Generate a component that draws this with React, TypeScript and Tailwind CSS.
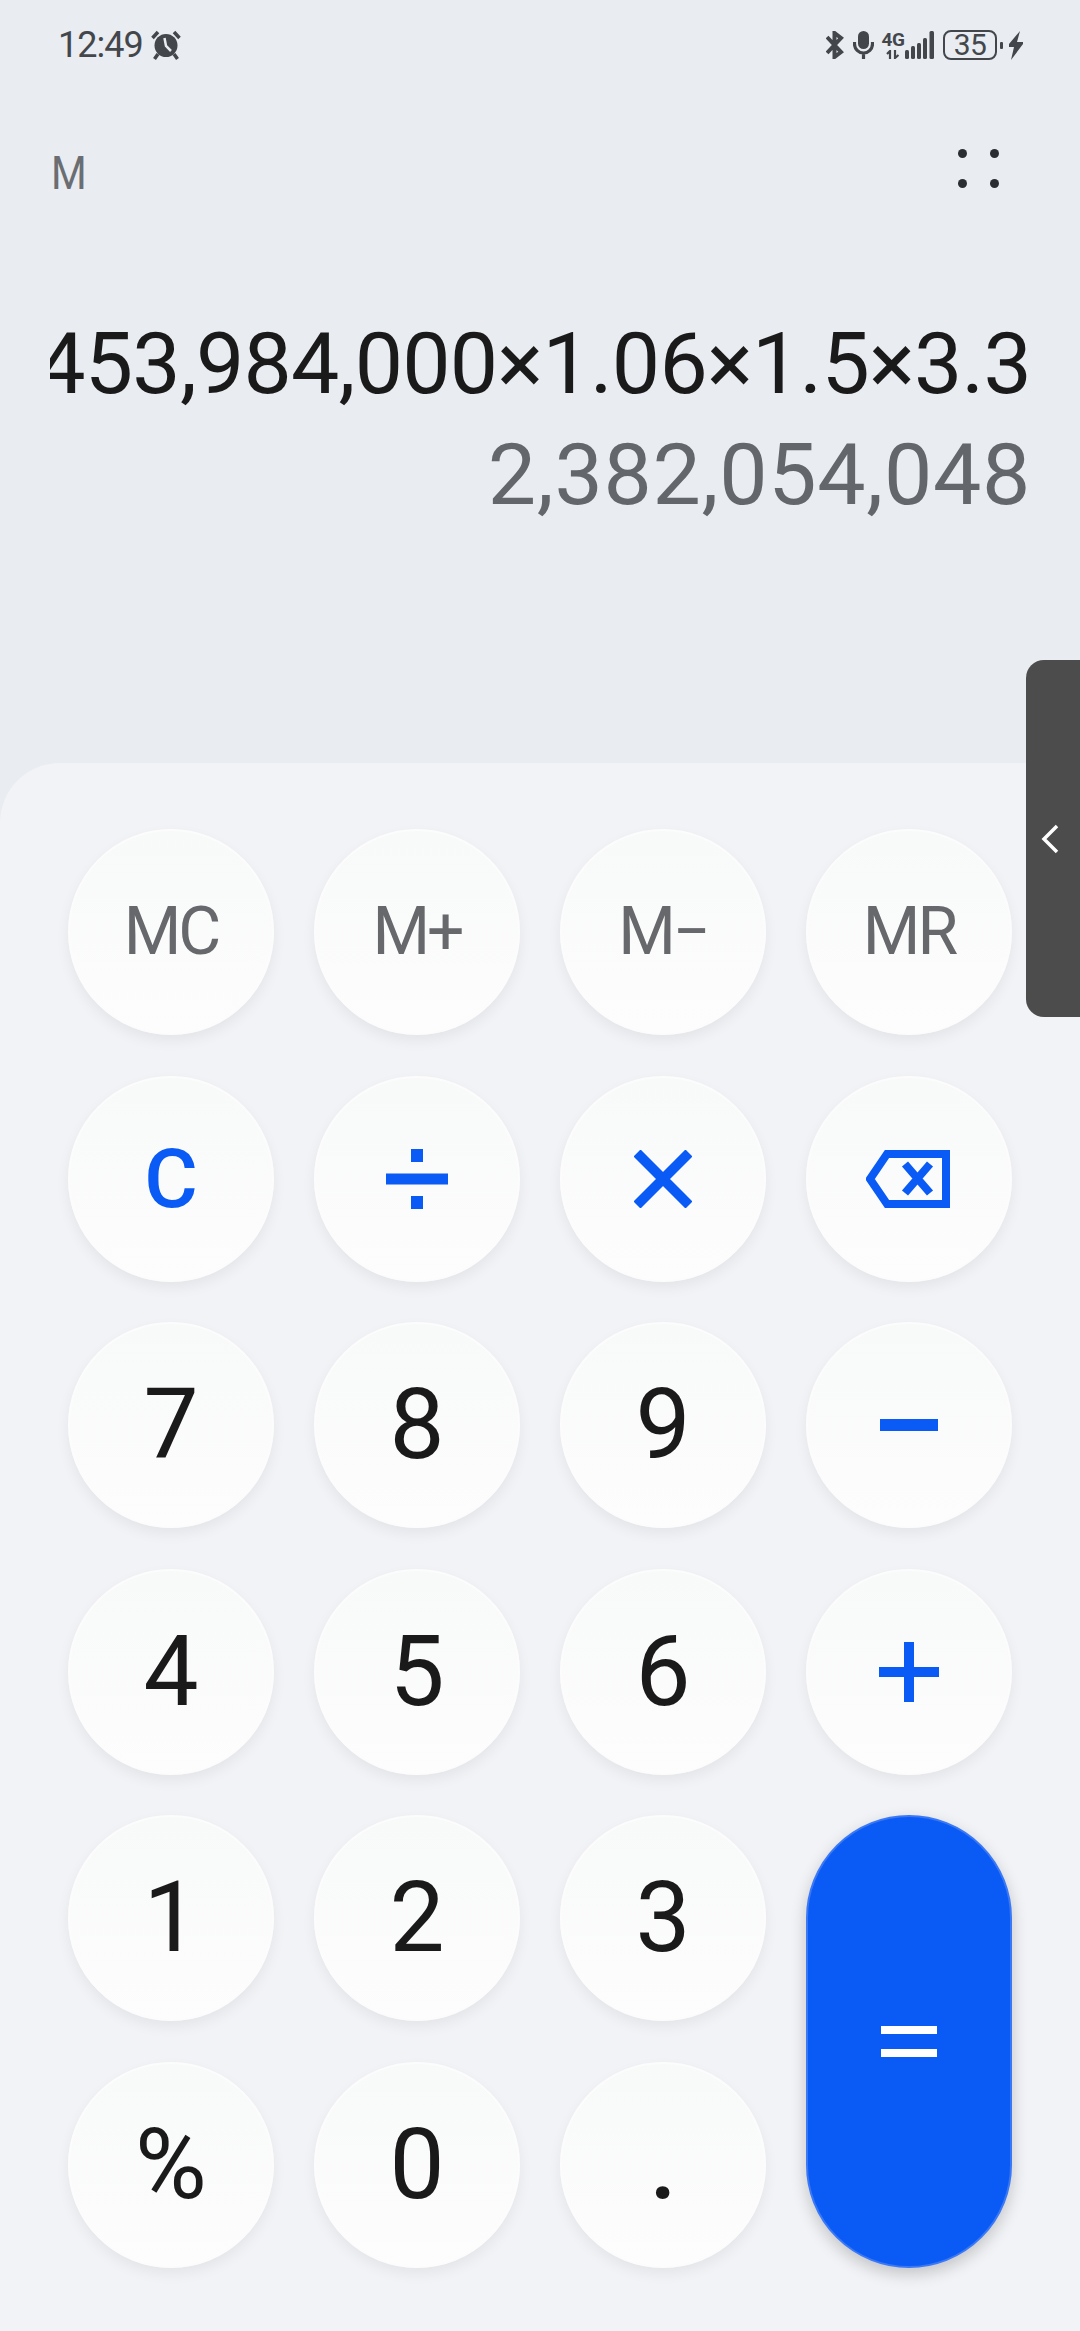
import React from "react";

const font = { fontFamily: "Roboto, sans-serif" };
const key =
  "flex h-[206px] w-[206px] items-center justify-center rounded-full border-2 border-[#fcfcfc] bg-gradient-to-b from-[#f8f9f9] to-[#fdfdfd] shadow-[0_6px_14px_rgba(0,0,0,0.06)]";
const memo = "text-[66px] leading-none tracking-[-3px] text-[#66686b] font-['Roboto',sans-serif]";
const digit = "text-[98px] leading-none text-[#1a1a1a] font-['Roboto',sans-serif]";

function Memo({ t }: { t: string }) {
  return (
    <div className={key}>
      <span className={memo}>{t}</span>
    </div>
  );
}
function Digit({ t }: { t: string }) {
  return (
    <div className={key}>
      <span className={t === "." ? digit + " font-medium" : digit}>{t}</span>
    </div>
  );
}

function Divide() {
  return (
    <svg width="62" height="60" viewBox="0 0 62 60" fill="#0a5bf5">
      <rect x="25" y="0" width="12" height="13" />
      <rect x="0" y="24.5" width="62" height="11" />
      <rect x="25" y="47" width="12" height="13" />
    </svg>
  );
}
function Times() {
  return (
    <svg width="58" height="58" viewBox="0 0 58 58" fill="none" stroke="#0a5bf5" strokeWidth="10">
      <path d="M3 3 L55 55 M55 3 L3 55" />
    </svg>
  );
}
function Backspace() {
  return (
    <svg width="86" height="58" viewBox="0 0 86 58" fill="none" stroke="#0a5bf5">
      <path d="M80 4 H21 L4 29 L21 54 H80 Z" strokeWidth="8" />
      <path d="M39 14 L64 43 M64 14 L39 43" strokeWidth="8" />
    </svg>
  );
}
function Minus() {
  return (
    <svg width="58" height="12" viewBox="0 0 58 12" fill="#0a5bf5">
      <rect width="58" height="12" />
    </svg>
  );
}
function Plus() {
  return (
    <svg width="60" height="60" viewBox="0 0 60 60" fill="#0a5bf5">
      <rect x="0" y="25" width="60" height="10" />
      <rect x="25" y="0" width="10" height="60" />
    </svg>
  );
}
function Equals() {
  return (
    <svg width="56" height="31" viewBox="0 0 56 31" fill="#ffffff">
      <rect width="56" height="8" />
      <rect y="23" width="56" height="8" />
    </svg>
  );
}
function Alarm() {
  return (
    <svg width="30" height="30" viewBox="0 0 30 30">
      <circle cx="15" cy="15.500" r="11.500" fill="#43474c" />
      <path d="M13.500 8 L15 16 L20 21" stroke="#e9ecf1" strokeWidth="2.500" fill="none" />
      <path d="M1.500 8 L7 2 M28.500 8 L23 2 M7 24 L3.500 29 M23 24 L26.500 29" stroke="#43474c" strokeWidth="3.500" fill="none" />
    </svg>
  );
}
function Bluetooth() {
  return (
    <svg width="18" height="28" viewBox="0 0 18 28" fill="none" stroke="#43474c" strokeWidth="4">
      <path d="M1 6 L15 21 L8.500 26 V2 L15 7 L1 22" />
    </svg>
  );
}
function Mic() {
  return (
    <svg width="21" height="28" viewBox="0 0 21 28" fill="none" stroke="#43474c">
      <rect x="5" y="0" width="11" height="18" rx="5.500" fill="#43474c" stroke="none" />
      <path d="M1.500 11 V13 A9 9 0 0 0 19.500 13 V11 M10.500 22 V28" strokeWidth="3.200" />
    </svg>
  );
}
function Signal() {
  return (
    <svg width="29" height="28" viewBox="0 0 29 28" fill="#43474c">
      <rect x="0" y="19" width="4" height="9" rx="1.500" />
      <rect x="6" y="15" width="4" height="13" rx="1.500" />
      <rect x="12" y="12" width="4" height="16" rx="1.500" />
      <rect x="18" y="7" width="4" height="21" rx="1.500" />
      <rect x="24.500" y="0" width="4.500" height="28" rx="1.500" />
    </svg>
  );
}
function Arrows() {
  return (
    <svg width="14" height="9" viewBox="0 0 14 9" fill="none" stroke="#43474c" strokeWidth="2.200">
      <path d="M4 9 V1 L1 4 M9 0 V8 L12.500 5" />
    </svg>
  );
}
function Bolt() {
  return (
    <svg width="15" height="29" viewBox="0 0 15 29" fill="#43474c">
      <path d="M12 0 L1 13 L1 16 H6 L3 29 L15 13 L15 11 H9 Z" />
    </svg>
  );
}

export default function App() {
  return (
    <div className="relative flex h-[2331px] w-[1080px] flex-col overflow-hidden bg-[#e9ecf1]" style={font}>
      <div className="flex h-[763px] shrink-0 flex-col">
        {/* status bar */}
        <div className="flex h-[60px] items-end justify-between pl-[58px] pr-[57px]">
          <div className="flex items-center gap-[8px]">
            <span className="text-[36px] leading-[30px] tracking-[-1px] text-[#43474c]">12:49</span>
            <Alarm />
          </div>
          <div className="flex items-center">
            <Bluetooth />
            <div className="ml-[9px]">
              <Mic />
            </div>
            <div className="ml-[9px] flex w-[20px] flex-col items-center">
              <span className="text-[19px] font-bold leading-[16px] tracking-[-0.5px] text-[#43474c]">4G</span>
              <div className="mt-[2px]">
                <Arrows />
              </div>
            </div>
            <div className="ml-[2px]">
              <Signal />
            </div>
            <div className="ml-[9px] flex h-[30px] w-[54px] items-center justify-center rounded-[8px] border-[2.500px] border-[#43474c]">
              <span className="text-[30px] leading-none tracking-[-0.5px] text-[#43474c]">35</span>
            </div>
            <div className="ml-[3px] h-[7px] w-[3px] rounded-[1px] bg-[#43474c]" />
            <div className="ml-[5px]">
              <Bolt />
            </div>
          </div>
        </div>
        {/* top row */}
        <div className="mt-[89px] flex items-center justify-between pl-[51px] pr-[81px]">
          <span className="origin-left scale-x-[0.87] text-[47px] leading-[46px] text-[#6a6e72]">M</span>
          <div className="mb-[8px] grid grid-cols-[9px_9px] gap-x-[23px] gap-y-[21px]">
            <div className="h-[9px] w-[9px] rounded-full bg-[#2a2d31]" />
            <div className="h-[9px] w-[9px] rounded-full bg-[#2a2d31]" />
            <div className="h-[9px] w-[9px] rounded-full bg-[#2a2d31]" />
            <div className="h-[9px] w-[9px] rounded-full bg-[#2a2d31]" />
          </div>
        </div>
        {/* display */}
        <div className="ml-[50px] mr-[49px] mt-[112px] flex justify-end overflow-hidden whitespace-nowrap text-[86px] leading-[111px] tracking-[-0.8px] text-[#1a1a1a]">
          <span className="shrink-0">453,984,000×1.06×1.5×3.3</span>
        </div>
        <div className="mr-[49px] flex justify-end whitespace-nowrap text-[86px] leading-[111px] tracking-[0.7px] text-[#63676b]">
          2,382,054,048
        </div>
      </div>

      {/* keypad panel */}
      <div className="flex-1 rounded-tl-[60px] bg-[#f2f3f6] pl-[68px] pt-[66px]">
        <div className="grid grid-cols-[repeat(4,206px)] auto-rows-[206px] gap-x-[40px] gap-y-[40.6px]">
          <Memo t="MC" />
          <Memo t="M+" />
          <Memo t="M−" />
          <Memo t="MR" />
          <div className={key}>
            <span className="text-[82px] font-medium leading-none text-[#0a5bf5]">C</span>
          </div>
          <div className={key}>
            <Divide />
          </div>
          <div className={key}>
            <Times />
          </div>
          <div className={key}>
            <Backspace />
          </div>
          <Digit t="7" />
          <Digit t="8" />
          <Digit t="9" />
          <div className={key}>
            <Minus />
          </div>
          <Digit t="4" />
          <Digit t="5" />
          <Digit t="6" />
          <div className={key}>
            <Plus />
          </div>
          <Digit t="1" />
          <Digit t="2" />
          <Digit t="3" />
          <div className="row-span-2 flex w-[206px] items-center justify-center rounded-full border-2 border-[#3a78f6] bg-[#0a5bf6] shadow-[0_6px_16px_rgba(0,0,0,0.2)]">
            <Equals />
          </div>
          <Digit t="%" />
          <Digit t="0" />
          <Digit t="." />
        </div>
      </div>

      {/* side handle */}
      <div className="absolute right-0 top-[660px] flex h-[357px] w-[54px] items-center rounded-l-[18px] bg-[#4c4c4c] pl-[15px]">
        <svg width="18" height="30" viewBox="0 0 18 30" fill="none" stroke="#ffffff" strokeWidth="3.500">
          <path d="M16 2 L3 15 L16 28" />
        </svg>
      </div>
    </div>
  );
}
